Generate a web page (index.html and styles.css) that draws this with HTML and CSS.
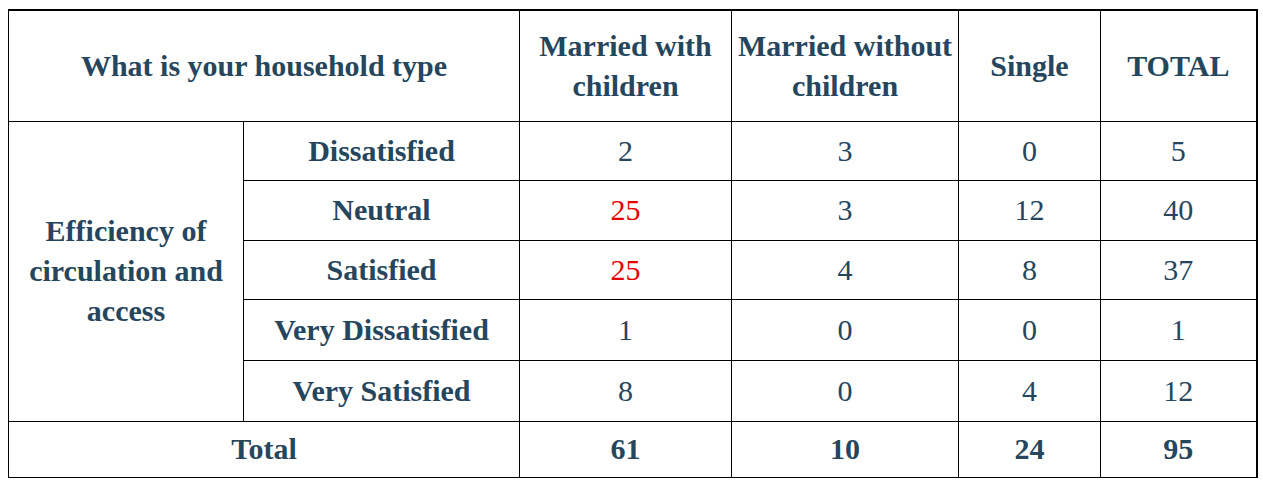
FILE: index.html
```html
<!DOCTYPE html>
<html>
<head>
<meta charset="utf-8">
<link rel="stylesheet" href="styles.css">
</head>
<body>
<table class="xtab">
  <colgroup>
    <col class="c1"><col class="c2"><col class="c3"><col class="c4"><col class="c5"><col class="c6">
  </colgroup>
  <tr class="r-head">
    <th colspan="2">What is your household type</th>
    <th>Married with<br>children</th>
    <th>Married without<br>children</th>
    <th>Single</th>
    <th>TOTAL</th>
  </tr>
  <tr class="r1">
    <th rowspan="5" class="group">Efficiency of<br>circulation and<br>access</th>
    <th>Dissatisfied</th>
    <td>2</td><td>3</td><td>0</td><td>5</td>
  </tr>
  <tr class="r2">
    <th>Neutral</th>
    <td class="hl">25</td><td>3</td><td>12</td><td>40</td>
  </tr>
  <tr class="r3">
    <th>Satisfied</th>
    <td class="hl">25</td><td>4</td><td>8</td><td>37</td>
  </tr>
  <tr class="r4">
    <th>Very Dissatisfied</th>
    <td>1</td><td>0</td><td>0</td><td>1</td>
  </tr>
  <tr class="r5">
    <th>Very Satisfied</th>
    <td>8</td><td>0</td><td>4</td><td>12</td>
  </tr>
  <tr class="r-total">
    <th colspan="2">Total</th>
    <th>61</th><th>10</th><th>24</th><th>95</th>
  </tr>
</table>
</body>
</html>
```

FILE: styles.css
```css
html, body {
  background: #ffffff;
}
body {
  margin: 9px 0 0 8px;
}
.xtab {
  border-collapse: collapse;
  table-layout: fixed;
  width: 1248px;
  font-family: "Liberation Serif", "Times New Roman", serif;
  font-size: 30px;
  color: #25465d;
  border-top: 2px solid #000;
  border-right: 2px solid #000;
}
.c1 { width: 235px; }
.c2 { width: 276px; }
.c3 { width: 212px; }
.c4 { width: 227px; }
.c5 { width: 142px; }
.c6 { width: 156px; }
.xtab th,
.xtab td {
  border: 1px solid #000;
  padding: 0;
  text-align: center;
  vertical-align: middle;
  line-height: 40px;
  white-space: nowrap;
}
.xtab th { font-weight: bold; }
.xtab td { font-weight: normal; }
.xtab td.hl { color: #e60000; }
.r-head { height: 111px; }
.r1 { height: 59px; }
.r2 { height: 60px; }
.r3 { height: 59px; }
.r4 { height: 61px; }
.r5 { height: 61px; }
.r-total { height: 56px; }
```
